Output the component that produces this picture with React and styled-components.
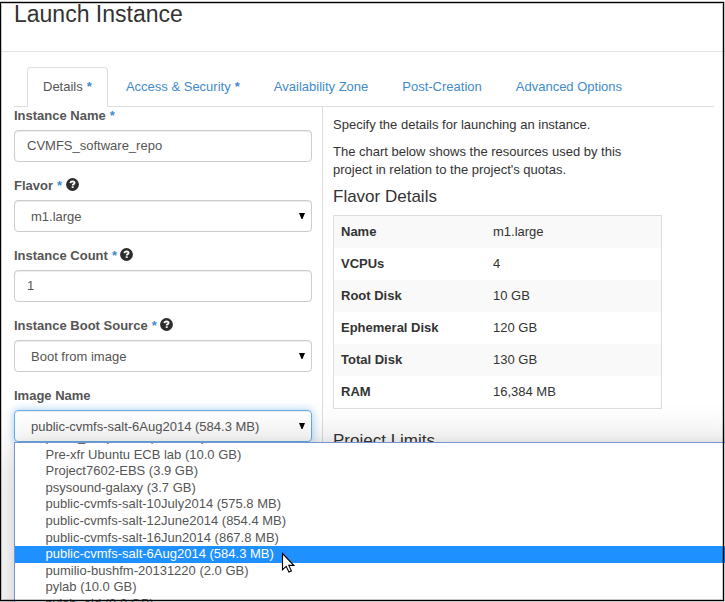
import React from "react";
import styled, { createGlobalStyle } from "styled-components";

const Global = createGlobalStyle`
  * { box-sizing: border-box; }
  body { margin: 0; background: #fff; overflow: hidden; }
`;

const Page = styled.div`
  position: relative;
  width: 725px;
  height: 602px;
  overflow: hidden;
  font: 13px/18px "Liberation Sans", Arial, sans-serif;
  color: #333;
  background: #fff;
`;

const Frame = styled.div`
  position: absolute;
  inset: 1px 0 0 -1px;
  border: 1px solid rgba(0, 0, 0, 0.22);
  pointer-events: none;
  &::before {
    content: "";
    position: absolute;
    inset: 0;
    border: 1px solid #000;
  }
  &::after {
    content: "";
    position: absolute;
    inset: 1px;
    border: 1px solid rgba(0, 0, 0, 0.22);
  }
`;

const Header = styled.header`
  height: 52px;
  padding: 1px 14px 0;
  border-bottom: 1px solid #e2e2e2;
`;

const Title = styled.h3`
  margin: 0;
  font-size: 23px;
  line-height: 26px;
  font-weight: 400;
`;

const Body = styled.main`
  padding: 15px 11px 0 14px;
`;

const Tabs = styled.nav`
  display: flex;
  gap: 2px;
  height: 40px;
  padding-left: 13px;
  border-bottom: 1px solid #ddd;
`;

const Tab = styled.a`
  height: 40px;
  padding: 10px 15px;
  border: 1px solid ${(p) => (p.$active ? "#ddd" : "transparent")};
  border-bottom-color: ${(p) => (p.$active ? "#fff" : "transparent")};
  border-radius: 4px 4px 0 0;
  color: ${(p) => (p.$active ? "#555" : "#428bca")};
  white-space: nowrap;
`;

const Star = styled.span`
  color: #428bca;
  font-weight: 700;
`;

const TabStar = styled(Star)`
  margin-left: 0.5px;
`;

const Columns = styled.div`
  display: grid;
  grid-template-columns: 308px 1fr;
`;

const Form = styled.form`
  padding-right: 10px;
`;

const Field = styled.div`
  margin-bottom: 15px;
`;

const Label = styled.label`
  display: flex;
  height: 18px;
  margin-bottom: 5px;
  gap: 4px;
  color: #555;
  font-weight: 700;
`;

const HelpIcon = styled.svg`
  width: 13px;
  height: 13px;
  margin: 1px 0 0 -0.5px;
`;

const Control = styled.div`
  display: flex;
  justify-content: space-between;
  height: 32px;
  padding: ${(p) => (p.$select ? "7px 6px 5px 16px" : "6px 12px")};
  border: 1px solid ${(p) => (p.$focus ? "#66afe9" : "#ccc")};
  border-radius: 4px;
  color: #555;
  box-shadow: inset 0 1px 1px rgba(0, 0, 0, 0.075)
    ${(p) => (p.$focus ? ", 0 0 8px rgba(102, 175, 233, 0.6)" : "")};
`;

const Arrow = styled.svg`
  width: 6px;
  height: 7px;
  margin-top: 4px;
`;

const Info = styled.section`
  height: 480px;
  padding: 9px 0 0 10px;
  border-left: 1px solid #ddd;
`;

const Text = styled.p`
  width: 310px;
  margin: 0 0 9px;
`;

const Heading = styled.h4`
  margin: ${(p) => (p.$spaced ? "23px 0 9px" : "0 0 9px")};
  font-size: 17px;
  line-height: 18px;
  font-weight: 400;
`;

const Table = styled.dl`
  width: 329px;
  margin: 0;
  border: 1px solid #ddd;
`;

const Row = styled.div`
  display: grid;
  grid-template-columns: 152px 1fr;
  height: 32px;
  padding: 7px;
  &:nth-child(odd) { background: #f9f9f9; }
`;

const Term = styled.dt`
  font-weight: 700;
`;

const Value = styled.dd`
  margin: 0;
`;

const Popup = styled.ul`
  position: absolute;
  left: 14px;
  top: 442px;
  width: 740px;
  height: 200px;
  margin: 0;
  padding: 0;
  overflow: hidden;
  list-style: none;
  border: 1px solid #7494d2;
  background: #fff;
`;

const PopupShadow = styled.div`
  position: absolute;
  left: 14px;
  top: 442px;
  width: 740px;
  height: 200px;
  box-shadow: 0 0 8px rgba(0, 0, 0, 0.06), 0 4px 40px rgba(0, 0, 0, 0.2);
`;

const Option = styled.li`
  height: ${(p) => p.$height}px;
  padding-left: 30.5px;
  line-height: 16px;
  white-space: nowrap;
  color: ${(p) => (p.$selected ? "#fff" : "#555")};
  background: ${(p) => (p.$selected ? "#1e90ff" : "transparent")};
  &:first-child { margin-top: -12px; line-height: 12px; }
`;

const Cursor = styled.svg`
  position: absolute;
  left: 281px;
  top: 552px;
  width: 14px;
  height: 22px;
`;

const tabs = [
  { text: "Details", required: true, active: true },
  { text: "Access & Security", required: true },
  { text: "Availability Zone" },
  { text: "Post-Creation" },
  { text: "Advanced Options" },
];

const fields = [
  { label: "Instance Name", value: "CVMFS_software_repo", required: true },
  { label: "Flavor", value: "m1.large", required: true, help: true, select: true },
  { label: "Instance Count", value: "1", required: true, help: true },
  { label: "Instance Boot Source", value: "Boot from image", required: true, help: true, select: true },
  { label: "Image Name", value: "public-cvmfs-salt-6Aug2014 (584.3 MB)", select: true, focus: true },
];

const details = [
  ["Name", "m1.large"],
  ["VCPUs", "4"],
  ["Root Disk", "10 GB"],
  ["Ephemeral Disk", "120 GB"],
  ["Total Disk", "130 GB"],
  ["RAM", "16,384 MB"],
];

const options = [
  ["prault_snapshot1 (10.0 GB)", 16],
  ["Pre-xfr Ubuntu ECB lab (10.0 GB)", 16],
  ["Project7602-EBS (3.9 GB)", 17],
  ["psysound-galaxy (3.7 GB)", 16],
  ["public-cvmfs-salt-10July2014 (575.8 MB)", 17],
  ["public-cvmfs-salt-12June2014 (854.4 MB)", 17],
  ["public-cvmfs-salt-16Jun2014 (867.8 MB)", 16],
  ["public-cvmfs-salt-6Aug2014 (584.3 MB)", 17],
  ["pumilio-bushfm-20131220 (2.0 GB)", 16],
  ["pylab (10.0 GB)", 17],
  ["pylab_old (9.9 GB)", 17],
];

const Help = () => (
  <HelpIcon viewBox="0 0 13 13">
    <circle cx="6.5" cy="6.5" r="6.4" fill="#2d2d2d" />
    <path d="M4.4 5.1Q4.5 3.3 6.6 3.3Q8.6 3.4 8.6 4.9Q8.5 5.9 7.3 6.4Q6.7 6.7 6.7 7.4" fill="none" stroke="#fff" strokeWidth="1.8" />
    <path d="M5.7 8.3h2v1.6h-2z" fill="#fff" />
  </HelpIcon>
);

export default function App() {
  return (
    <Page>
      <Global />
      <Header>
        <Title>Launch Instance</Title>
      </Header>
      <Body>
        <Tabs>
          {tabs.map((t) => (
            <Tab key={t.text} $active={t.active}>
              {t.text}
              {t.required && <TabStar> *</TabStar>}
            </Tab>
          ))}
        </Tabs>
        <Columns>
          <Form>
            {fields.map((f) => (
              <Field key={f.label}>
                <Label>
                  {f.label}
                  {f.required && <Star>*</Star>}
                  {f.help && <Help />}
                </Label>
                <Control $select={f.select} $focus={f.focus}>
                  {f.value}
                  {f.select && (
                    <Arrow viewBox="0 0 6 7">
                      <path d="M0 1h6L3.5 7h-1z" />
                    </Arrow>
                  )}
                </Control>
              </Field>
            ))}
          </Form>
          <Info>
            <Text>Specify the details for launching an instance.</Text>
            <Text>The chart below shows the resources used by this project in relation to the project's quotas.</Text>
            <Heading>Flavor Details</Heading>
            <Table>
              {details.map(([term, value]) => (
                <Row key={term}>
                  <Term>{term}</Term>
                  <Value>{value}</Value>
                </Row>
              ))}
            </Table>
            <Heading $spaced>Project Limits</Heading>
          </Info>
        </Columns>
      </Body>
      <PopupShadow />
      <Popup>
        {options.map(([name, height]) => (
          <Option key={name} $height={height} $selected={name.includes("6Aug2014")}>
            {name}
          </Option>
        ))}
      </Popup>
      <Cursor viewBox="0 0 14 22">
        <path d="M1.5 1.5v16.2l3.7-3.4 2.7 5.8 2.5-1.2-2.6-5.5h5z" fill="#fff" stroke="#000" strokeWidth="1.1" />
      </Cursor>
      <Frame />
    </Page>
  );
}
